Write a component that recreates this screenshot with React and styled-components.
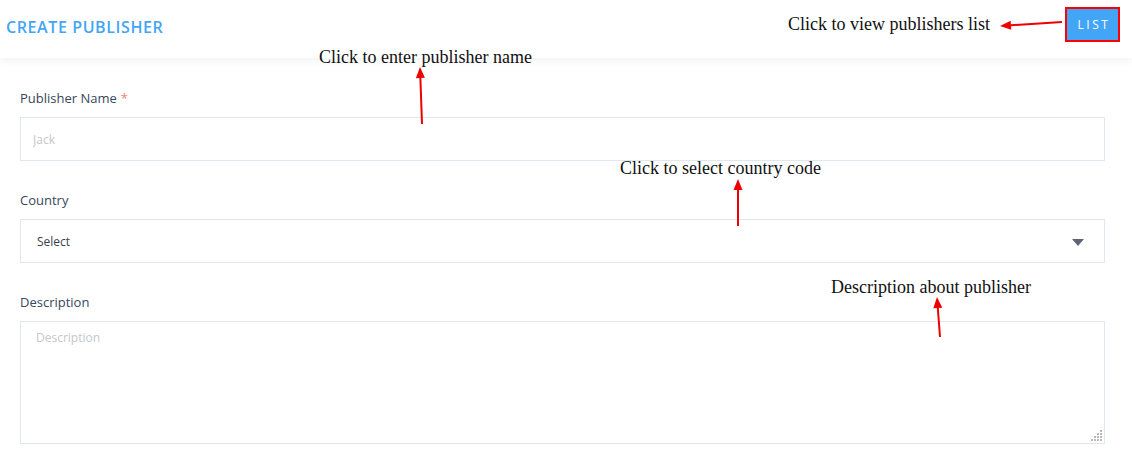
import React from 'react';
import styled, { createGlobalStyle } from 'styled-components';

const GlobalStyle = createGlobalStyle`
  html, body {
    margin: 0;
    padding: 0;
    background: #fff;
  }
  body {
    font-family: "Open Sans", "Liberation Sans", sans-serif;
  }
  * { box-sizing: border-box; }
`;

const Page = styled.div`
  position: relative;
  width: 1132px;
  height: 450px;
  overflow: hidden;
  background: #fff;
`;

const Header = styled.div`
  height: 58px;
  display: flex;
  align-items: center;
  justify-content: space-between;
  padding: 0 12px 0 6px;
  background: #fff;
  box-shadow: 0 3px 8px rgba(0, 0, 0, 0.05);
  position: relative;
  z-index: 1;
`;

const Title = styled.h4`
  margin: 0;
  margin-top: -4px;
  font-size: 16px;
  font-weight: 600;
  color: #42a5f5;
  letter-spacing: 0.6px;
`;

const ListButton = styled.button`
  align-self: flex-start;
  margin-top: 7px;
  width: 55px;
  height: 35px;
  background: #42a5f5;
  border: 2px solid #ff0000;
  color: #fff;
  font-family: "Open Sans", sans-serif;
  font-size: 12px;
  letter-spacing: 2.5px;
  padding: 0 0 0 3px;
  cursor: pointer;
`;

const Form = styled.div`
  padding: 31px 27px 0 20px;
  display: flex;
  flex-direction: column;
  gap: 30px;
`;

const Field = styled.div`
  position: relative;
  display: flex;
  flex-direction: column;
  gap: 10px;
`;

const Label = styled.label`
  font-size: 13px;
  line-height: 18px;
  color: #37475c;
`;

const Required = styled.span`
  color: #f2826c;
  margin-left: 4px;
`;

const TextInput = styled.input`
  height: 44px;
  width: 100%;
  border: 1px solid #dfe6f4;
  border-radius: 0;
  padding: 0 12px;
  font-family: "Open Sans", sans-serif;
  font-size: 12px;
  color: #333;
  outline: none;
  &::placeholder { color: #c5c7cb; }
`;

const SelectBox = styled.div`
  height: 44px;
  display: flex;
  align-items: center;
  justify-content: space-between;
  border: 1px solid #dfe6f4;
  padding: 0 20px 0 16px;
  font-size: 12px;
  color: #3a3f48;
`;

const Caret = styled.span`
  width: 0;
  height: 0;
  margin-top: 3px;
  border-left: 6px solid transparent;
  border-right: 6px solid transparent;
  border-top: 7px solid #5d6576;
`;

const TextArea = styled.textarea`
  display: block;
  height: 123px;
  width: 100%;
  border: 1px solid #dfe6f4;
  border-radius: 0;
  padding: 7px 15px;
  font-family: "Open Sans", sans-serif;
  font-size: 12px;
  outline: none;
  resize: none;
  &::placeholder { color: #c5c7cb; }
`;

const Grip = styled.svg`
  position: absolute;
  right: 3px;
  bottom: 3px;
`;

const Note = styled.div`
  position: absolute;
  left: ${p => p.x}px;
  top: ${p => p.y}px;
  font-family: "Liberation Serif", "Times New Roman", serif;
  font-size: 18px;
  line-height: 20px;
  color: #111;
  white-space: nowrap;
  z-index: 3;
`;

const Arrows = styled.svg`
  position: absolute;
  left: 0;
  top: 0;
  pointer-events: none;
  z-index: 4;
`;

const notes = [
  { x: 788, y: 14, text: "Click to view publishers list" },
  { x: 319, y: 47, text: "Click to enter publisher name" },
  { x: 620, y: 158, text: "Click to select country code" },
  { x: 831, y: 277, text: "Description about publisher" },
];

const arrows = [
  { x1: 1062, y1: 22, x2: 1000, y2: 26 },
  { x1: 422, y1: 124, x2: 420, y2: 67 },
  { x1: 738, y1: 226, x2: 738, y2: 179 },
  { x1: 940, y1: 337, x2: 937, y2: 297 },
];

const gripDots = [[9, 1], [6, 4], [9, 4], [3, 7], [6, 7], [9, 7], [0, 10], [3, 10], [6, 10], [9, 10]];

function Arrow({ x1, y1, x2, y2 }) {
  const a = Math.atan2(y2 - y1, x2 - x1);
  const len = 11, half = 4.5;
  const bx = x2 - len * Math.cos(a), by = y2 - len * Math.sin(a);
  const px = -Math.sin(a) * half, py = Math.cos(a) * half;
  return (
    <g>
      <line x1={x1} y1={y1} x2={bx} y2={by} stroke="#ee0000" strokeWidth="2" />
      <polygon points={`${x2},${y2} ${bx + px},${by + py} ${bx - px},${by - py}`} fill="#ee0000" />
    </g>
  );
}

export default function App() {
  return (
    <Page>
      <GlobalStyle />
      <Header>
        <Title>CREATE PUBLISHER</Title>
        <ListButton>LIST</ListButton>
      </Header>
      <Form>
        <Field>
          <Label>Publisher Name<Required>*</Required></Label>
          <TextInput placeholder="Jack" />
        </Field>
        <Field>
          <Label>Country</Label>
          <SelectBox>
            <span>Select</span>
            <Caret />
          </SelectBox>
        </Field>
        <Field>
          <Label>Description</Label>
          <TextArea placeholder="Description" />
          <Grip width="11" height="12" viewBox="0 0 11 12">
            {gripDots.map(([x, y], i) => (
              <rect key={"dot" + i} x={x} y={y} width="2" height="2" fill="#b8b8b8" />
            ))}
          </Grip>
        </Field>
      </Form>
      {notes.map((n, i) => (
        <Note key={"note" + i} x={n.x} y={n.y}>{n.text}</Note>
      ))}
      <Arrows width="1132" height="450">
        {arrows.map((a, i) => <Arrow key={"arrow" + i} {...a} />)}
      </Arrows>
    </Page>
  );
}
